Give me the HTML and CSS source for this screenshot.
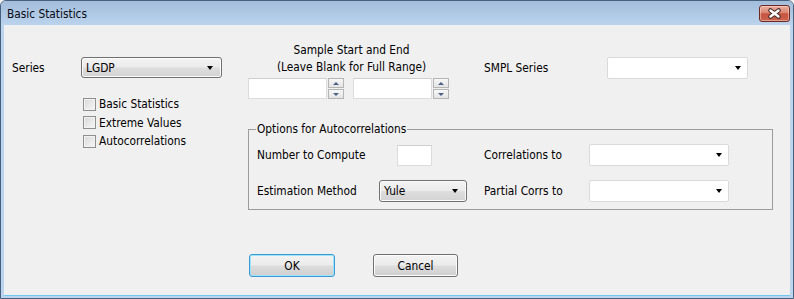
FILE: index.html
```html
<!DOCTYPE html>
<html lang="en">
<head>
  <meta charset="UTF-8" />
  <title>Basic Statistics</title>
  <link rel="stylesheet" href="styles.css">
</head>
<body>
  <div class="window">
    <!-- Titelleiste -->
    <div class="titlebar">
      <span class="title">Basic Statistics</span>
      <button class="close" aria-label="Close">
        <svg width="31" height="17" viewBox="0 0 31 17">
          <path d="M11.5 5.5 L19.5 11.5 M19.5 5.5 L11.5 11.5" stroke="#4a2a26" stroke-width="4.6" stroke-linecap="round" fill="none"/>
          <path d="M11.5 5.5 L19.5 11.5 M19.5 5.5 L11.5 11.5" stroke="#ffffff" stroke-width="2.4" stroke-linecap="round" fill="none"/>
        </svg>
      </button>
    </div>

    <div class="client">
      <!-- Linke Spalte -->
      <div class="left-col">
        <div class="series-row">
          <span class="series-label">Series</span>
          <div class="combo combo-btn series-combo"><span>LGDP</span><i class="arrow"></i></div>
        </div>

        <div class="checks">
          <label class="check"><span class="box"></span>Basic Statistics</label>
          <label class="check"><span class="box"></span>Extreme Values</label>
          <label class="check"><span class="box"></span>Autocorrelations</label>
        </div>
      </div>

      <!-- Rechte Spalte -->
      <div class="right-col">
        <div class="top-row">
          <div class="sample">
            <div class="sample-head">Sample Start and End<br>(Leave Blank for Full Range)</div>
            <div class="spinners">
              <div class="spin">
                <div class="edit spin-edit"></div>
                <div class="spin-btns"><span class="spin-btn"><i class="tri-up"></i></span><span class="spin-btn"><i class="tri-down"></i></span></div>
              </div>
              <div class="spin">
                <div class="edit spin-edit"></div>
                <div class="spin-btns"><span class="spin-btn"><i class="tri-up"></i></span><span class="spin-btn"><i class="tri-down"></i></span></div>
              </div>
            </div>
          </div>

          <div class="smpl">
            <span class="smpl-label">SMPL Series</span>
            <div class="combo combo-white smpl-combo"><i class="arrow"></i></div>
          </div>
        </div>

        <fieldset class="group">
          <legend>Options for Autocorrelations</legend>
          <div class="group-grid">
            <span>Number to Compute</span>
            <div><div class="edit num-edit"></div></div>
            <span>Correlations to</span>
            <div class="combo combo-white"><i class="arrow"></i></div>

            <span>Estimation Method</span>
            <div class="combo combo-btn yule-combo"><span>Yule</span><i class="arrow"></i></div>
            <span>Partial Corrs to</span>
            <div class="combo combo-white"><i class="arrow"></i></div>
          </div>
        </fieldset>

        <div class="buttons">
          <button class="btn btn-default">OK</button>
          <button class="btn btn-cancel">Cancel</button>
        </div>
      </div>
    </div>
  </div>
</body>
</html>
```

FILE: styles.css
```css
html, body {
  margin: 0;
  font-family: "DejaVu Sans Condensed", "DejaVu Sans", sans-serif;
  font-stretch: condensed;
  font-size: 11.8px;
  color: #000;
  background: #f0f0f0;
}

.window {
  width: 794px;
  height: 299px;
  box-sizing: border-box;
  border: 1px solid #47607e;
  border-radius: 6px 6px 0 0;
  background: #bcd4ee;
  display: flex;
  flex-direction: column;
  overflow: hidden;
}

/* Titelleiste */
.titlebar {
  height: 24px;
  flex: none;
  display: flex;
  justify-content: space-between;
  align-items: flex-start;
  padding: 0 3px 0 6px;
  background: linear-gradient(#a2bdda, #bbd3ed);
}

.title {
  padding-top: 6px;
  line-height: 14px;
  color: #0a0a14;
}

.close {
  margin-top: 4px;
  width: 31px;
  height: 17px;
  padding: 0;
  border: 1px solid #6c2a23;
  border-radius: 3px;
  background: linear-gradient(#eab0a2, #d98671 45%, #c8533f 52%, #c96450);
  box-shadow: inset 0 0 0 1px rgba(255, 220, 210, 0.5);
  display: flex;
}

.close svg {
  margin: -1px;
}

.client {
  flex: 1;
  margin: 0 3px 3px;
  background: #f0f0f0;
  display: flex;
  box-shadow: 0 1px 0 #6cc8ee;
}

.left-col {
  width: 244px;
  flex: none;
  box-sizing: border-box;
  padding-left: 8px;
}

.series-row {
  display: flex;
  align-items: center;
  margin-top: 32px;
}

.series-label {
  width: 69px;
}

/* Kombinationsfelder */
.combo {
  display: flex;
  align-items: center;
  box-sizing: border-box;
  height: 22px;
  padding: 0 7px 0 4px;
}

.combo-btn {
  border: 1px solid #707070;
  border-radius: 3px;
  background: linear-gradient(#f3f3f3, #ebebeb 48%, #dedede 52%, #d2d2d2);
  box-shadow: inset 0 0 0 1px #fbfbfb;
}

.combo-white {
  border: 1px solid #dadada;
  border-radius: 2px;
  background: #fff;
  padding-right: 6px;
}

.arrow {
  margin-left: auto;
  width: 0;
  height: 0;
  border-top: 4px solid #000;
  border-left: 3.5px solid transparent;
  border-right: 3.5px solid transparent;
}

.series-combo {
  width: 141px;
  height: 21px;
  padding-right: 8px;
}

/* Checkboxen */
.checks {
  margin-top: 17px;
  padding-left: 71px;
}

.check {
  display: flex;
  align-items: center;
  height: 18.5px;
}

.box {
  width: 13px;
  height: 13px;
  box-sizing: border-box;
  border: 1px solid #8f8f8f;
  background: linear-gradient(135deg, #d8d8d8, #f7f7f7);
  box-shadow: inset 0 0 0 1px #f2f2f2;
  margin-right: 3px;
}

.right-col {
  flex: 1;
}

.top-row {
  display: flex;
}

.sample {
  width: 201px;
  padding-top: 17px;
}

.sample-head {
  line-height: 17px;
  text-align: center;
  padding-left: 6px;
}

.spinners {
  display: flex;
  gap: 9px;
  margin-top: 2px;
}

.spin {
  display: flex;
}

.edit {
  box-sizing: border-box;
  background: #fff;
  border: 1px solid #dcdcdc;
  border-top-color: #cfcfcf;
}

.spin-edit {
  width: 79px;
  height: 21px;
}

.spin-btns {
  display: flex;
  flex-direction: column;
  gap: 1px;
  margin-left: 1px;
}

.spin-btn {
  width: 16px;
  height: 10px;
  box-sizing: border-box;
  border: 1px solid #b5b5b5;
  background: linear-gradient(#f7f7f7, #e4e4e4);
  display: flex;
  align-items: center;
  justify-content: center;
}

.tri-up {
  border-bottom: 3px solid #4d6185;
  border-left: 3px solid transparent;
  border-right: 3px solid transparent;
}

.tri-down {
  border-top: 3px solid #4d6185;
  border-left: 3px solid transparent;
  border-right: 3px solid transparent;
}

.smpl {
  display: flex;
  align-items: center;
  align-self: flex-start;
  margin-left: 35px;
  margin-top: 32px;
}

.smpl-label {
  width: 123px;
}

.smpl-combo {
  width: 141px;
}

/* Gruppenfeld */
.group {
  box-sizing: border-box;
  width: 525px;
  min-width: 0;
  margin: 23px 0 0;
  padding: 0 8px 7px;
  border: 1px solid #9c9c9c;
}

.group legend {
  padding: 0 1px;
  margin-left: -1px;
  line-height: 14px;
}

.group-grid {
  display: grid;
  grid-template-columns: 122px 105px 105px 140px;
  grid-auto-rows: 22px;
  row-gap: 14px;
  align-items: center;
  margin-top: 8px;
}

.num-edit {
  width: 35px;
  height: 21px;
  margin-left: 18px;
}

.yule-combo {
  width: 88px;
  padding-right: 8px;
}

/* Schaltflächen */
.buttons {
  display: flex;
  gap: 38px;
  margin-top: 44px;
  padding-left: 1px;
}

.btn {
  height: 23px;
  padding: 0;
  font: inherit;
  color: #000;
  border: 1px solid #707070;
  border-radius: 3px;
  background: linear-gradient(#f3f3f3, #ebebeb 48%, #dddddd 52%, #cfcfcf);
  box-shadow: inset 0 0 0 1px #fcfcfc;
}

.btn-default {
  width: 86px;
  border-color: #3a9ad6;
  box-shadow: inset 0 0 0 1px #9fe3fa;
}

.btn-cancel {
  width: 85px;
}
```
